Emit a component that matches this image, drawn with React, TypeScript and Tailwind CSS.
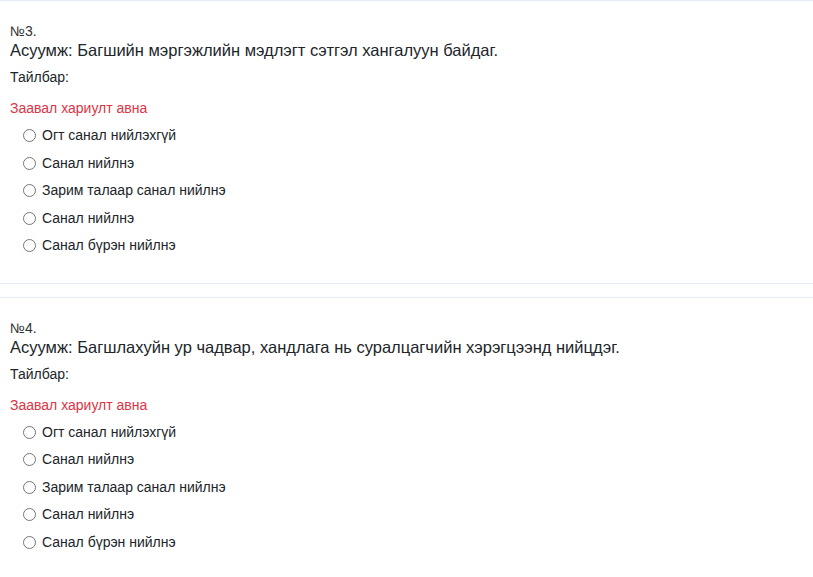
const options = [
  "Огт санал нийлэхгүй",
  "Санал нийлнэ",
  "Зарим талаар санал нийлнэ",
  "Санал нийлнэ",
  "Санал бүрэн нийлнэ",
];

const questions = [
  { no: 3, text: "Багшийн мэргэжлийн мэдлэгт сэтгэл хангалуун байдаг." },
  { no: 4, text: "Багшлахуйн ур чадвар, хандлага нь суралцагчийн хэрэгцээнд нийцдэг." },
];

function Question({ no, text }: { no: number; text: string }) {
  return (
    <div className="border-y border-[#e3ebf5] bg-white px-[10px] pt-[22px] pb-[23px]">
      <div className="text-[14px] leading-[17px] text-[#333]">№{no}.</div>
      <div className="text-[16.5px] leading-[20px]">Асуумж: {text}</div>
      <div className="mt-[7px] text-[14px] leading-[20px]">Тайлбар:</div>
      <div className="mt-[11px] text-[14px] leading-[20px] text-[#dc3545]">Заавал хариулт авна</div>
      <div className="pt-[4px]">
        {options.map((o, i) => (
          <label key={i} className="flex h-[27.5px] items-center pl-[13px] text-[14px]">
            <span className="mr-[6px] h-[13px] w-[13px] rounded-full border border-[#767676] bg-white" />
            {o}
          </label>
        ))}
      </div>
    </div>
  );
}

export default function App() {
  return (
    <div className="min-h-screen bg-white font-['Liberation_Sans',Arial,sans-serif] text-[#212529]">
      <div className="flex flex-col gap-[13px]">
        {questions.map((q) => (
          <Question key={q.no} {...q} />
        ))}
      </div>
    </div>
  );
}
